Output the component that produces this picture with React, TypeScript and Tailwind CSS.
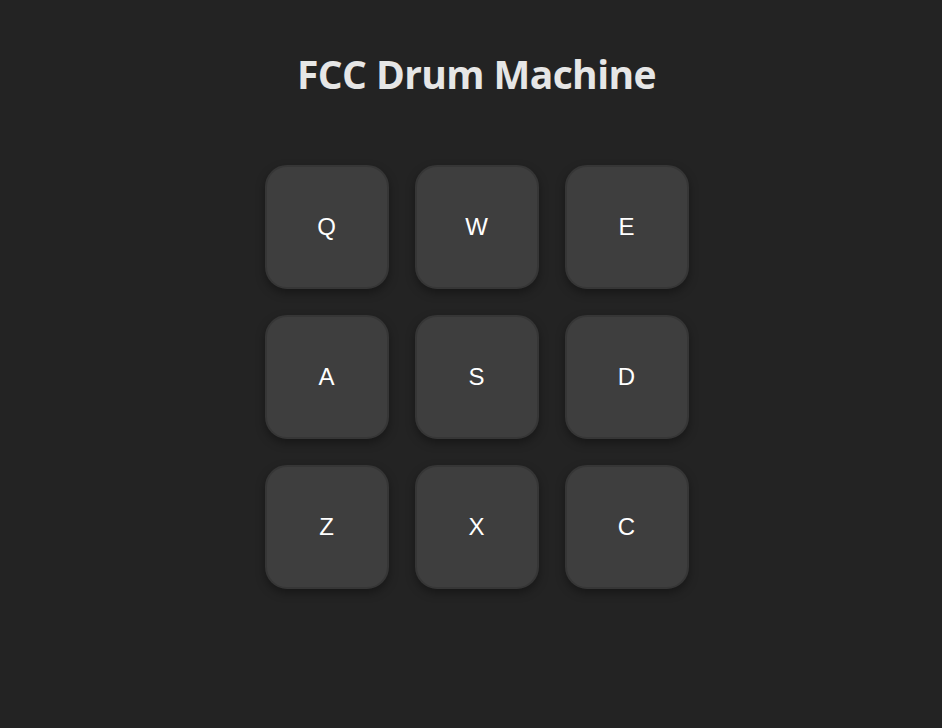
const PADS = ["Q", "W", "E", "A", "S", "D", "Z", "X", "C"]

export default function App() {
  return (
    <div className="min-h-screen bg-[#232323] flex flex-col items-center pt-[50px] pl-[11px]">
      <h1 className="text-[39px] leading-[48px] font-bold text-[#e6e6e6] font-['Open_Sans',sans-serif] tracking-[-0.6px]">
        FCC Drum Machine
      </h1>

      <div id="drum-machine" className="mt-[67px] grid grid-cols-3 gap-[26px]">
        {PADS.map((key) => (
          <button
            key={key}
            className="drum-pad w-[124px] h-[124px] rounded-[22px] bg-[#3e3e3e] border-2 border-[#363636] shadow-[0_4px_10px_rgba(0,0,0,0.35)] flex items-center justify-center text-white text-[24px] font-['Liberation_Sans',Arial,sans-serif]"
          >
            {key}
          </button>
        ))}
      </div>
    </div>
  )
}
